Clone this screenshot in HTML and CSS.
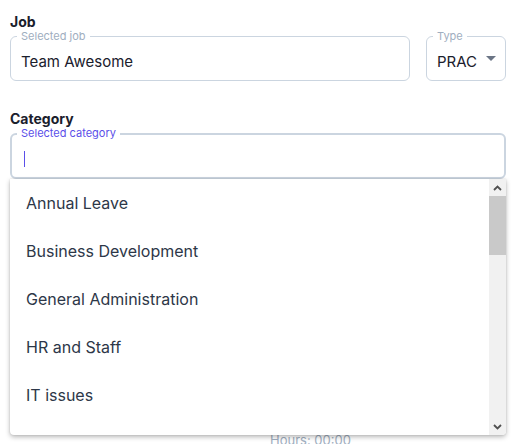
FILE: index.html
```html
<!DOCTYPE html>
<html>
<head>
<meta charset="utf-8">
<link rel="stylesheet" href="styles.css">
</head>
<body>
<div class="page">
  <div class="label">Job</div>
  <div class="job-row">
    <fieldset class="field field-job">
      <legend>Selected job</legend>
      <div class="value">Team Awesome</div>
    </fieldset>
    <fieldset class="field field-type">
      <legend>Type</legend>
      <div class="value select">
        <span>PRAC</span>
        <svg class="tri" width="10" height="5" viewBox="0 0 10 5"><path d="M0 0H10L5 5Z" fill="#6b7585"/></svg>
      </div>
    </fieldset>
  </div>

  <div class="label label-cat">Category</div>
  <div class="cat-wrap">
    <fieldset class="field field-cat">
      <legend>Selected category</legend>
      <div class="value"><span class="caret"></span></div>
    </fieldset>
    <div class="dropdown">
      <ul class="options">
        <li>Annual Leave</li>
        <li>Business Development</li>
        <li>General Administration</li>
        <li>HR and Staff</li>
        <li>IT issues</li>
      </ul>
      <div class="scrollbar">
        <div class="sb-btn">
          <svg width="9" height="6" viewBox="0 0 9 6"><path d="M1 5L4.5 1.5L8 5" fill="none" stroke="#505050" stroke-width="1.8"/></svg>
        </div>
        <div class="sb-track"><div class="sb-thumb"></div></div>
        <div class="sb-btn">
          <svg width="9" height="6" viewBox="0 0 9 6"><path d="M1 1L4.5 4.5L8 1" fill="none" stroke="#505050" stroke-width="1.8"/></svg>
        </div>
      </div>
    </div>
  </div>
  <div class="hours">Hours: 00:00</div>
</div>
</body>
</html>
```

FILE: styles.css
```css
html, body {
  margin: 0;
  padding: 0;
  background: #ffffff;
}
body {
  font-family: Inter, "Liberation Sans", sans-serif;
  color: #1a202c;
}
.page {
  width: 496px;
  margin-left: 10px;
  padding-top: 13px;
}
.label {
  font-size: 14px;
  line-height: 17px;
  font-weight: 700;
  color: #1a202c;
}
.label-cat {
  margin-top: 29px;
}
.job-row {
  display: flex;
  gap: 16px;
}
.field {
  margin: 0;
  min-width: 0;
  border: 1px solid #cbd5e0;
  border-radius: 6px;
  padding: 0 10px;
}
.field legend {
  font-size: 11px;
  line-height: 13px;
  color: #a0aec0;
  padding: 0 4px;
  margin-left: -4px;
}
.field-job {
  flex: 1;
}
.field-type {
  width: 80px;
  box-sizing: border-box;
  flex: none;
}
.value {
  height: 37px;
  display: flex;
  align-items: center;
  font-size: 15px;
  color: #1a202c;
}
.select {
  justify-content: space-between;
}
.tri {
  margin-top: -6px;
  margin-right: -1px;
}
.cat-wrap {
  position: relative;
}
.field-cat {
  border: 2px solid #cbd5e0;
}
.field-cat legend {
  color: #5b4fe9;
  margin-left: -5px;
}
.caret {
  display: block;
  width: 1px;
  height: 16px;
  background: #5b4fe9;
  margin-left: 2px;
  margin-top: 1px;
}
.dropdown {
  position: absolute;
  top: 100%;
  left: 0;
  right: 0;
  height: 256px;
  background: #ffffff;
  box-shadow: 0 2px 5px rgba(0, 0, 0, 0.28), 0 0 2px rgba(0, 0, 0, 0.12);
  border-radius: 0 0 4px 4px;
  display: flex;
  z-index: 2;
  overflow: hidden;
}
.options {
  list-style: none;
  margin: 0;
  padding: 0;
  flex: 1;
}
.options li {
  height: 48px;
  display: flex;
  align-items: center;
  padding-left: 16px;
  font-size: 16px;
  color: #2d3748;
}
.scrollbar {
  width: 17px;
  background: #f1f1f1;
  display: flex;
  flex-direction: column;
}
.sb-btn {
  height: 17px;
  display: flex;
  align-items: center;
  justify-content: center;
}
.sb-track {
  flex: 1;
}
.sb-thumb {
  height: 59px;
  background: #c9c9c9;
}
.hours {
  margin-top: 253px;
  margin-left: 260px;
  font-size: 13px;
  line-height: 16px;
  color: #a0aec0;
}
```
